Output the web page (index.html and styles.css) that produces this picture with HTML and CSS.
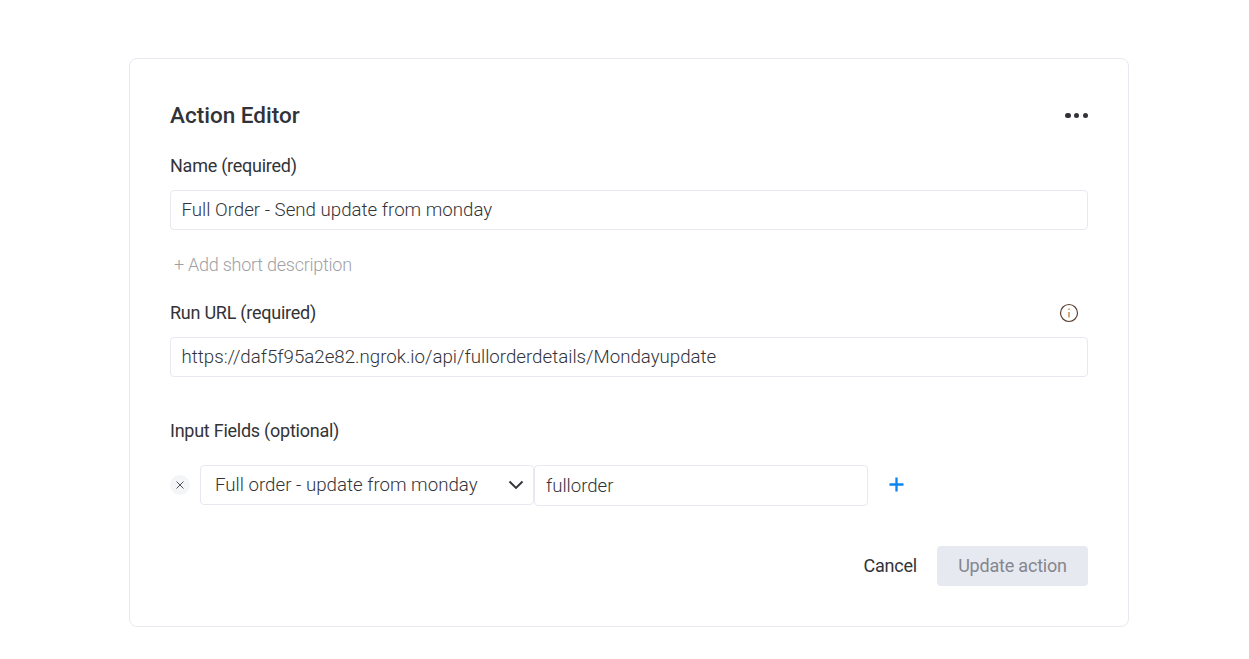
FILE: index.html
```html
<!DOCTYPE html>
<html lang="en">
<head>
    <meta charset="UTF-8">
    <meta name="viewport" content="width=device-width, initial-scale=1.0">
    <link rel="stylesheet" href="styles.css">
    <title>Action Editor</title>
</head>
<body>
    <main class="card">
        <div class="card-header">
            <h1>Action Editor</h1>
            <div class="more-menu"><span></span><span></span><span></span></div>
        </div>

        <div class="label-row name-label"><label>Name (required)</label></div>
        <div class="text-field">Full Order - Send update from monday</div>
        <div class="add-description">+ Add short description</div>

        <div class="label-row url-label">
            <label>Run URL (required)</label>
            <svg class="info-icon" width="20" height="20" viewBox="0 0 20 20" fill="none">
                <circle cx="10" cy="10" r="8.5" stroke="#5a4030" stroke-width="1.2"/>
                <path d="M10 9v5.5" stroke="#b5702a" stroke-width="1.2"/>
                <path d="M10 5.6v1.5" stroke="#b5702a" stroke-width="1.2"/>
            </svg>
        </div>
        <div class="text-field">https://daf5f95a2e82.ngrok.io/api/fullorderdetails/Mondayupdate</div>

        <div class="label-row inputs-label"><label>Input Fields (optional)</label></div>
        <div class="input-row">
            <div class="remove-btn">
                <svg width="10" height="10" viewBox="0 0 10 10" fill="none">
                    <path d="M1.5 1.5l7 7M8.5 1.5l-7 7" stroke="#50525a" stroke-width="1"/>
                </svg>
            </div>
            <div class="select-field">
                <span>Full order - update from monday</span>
                <svg width="16" height="10" viewBox="0 0 16 10" fill="none">
                    <path d="M1.5 1.5L8 8l6.5-6.5" stroke="#323338" stroke-width="1.9"/>
                </svg>
            </div>
            <div class="key-field">fullorder</div>
            <div class="add-btn">
                <svg width="15" height="15" viewBox="0 0 15 15" fill="none">
                    <path d="M7.5 0.5v14M0.5 7.5h14" stroke="#0a84f0" stroke-width="2.3"/>
                </svg>
            </div>
        </div>

        <div class="actions">
            <button class="cancel-btn" type="button">Cancel</button>
            <button class="update-btn" type="button">Update action</button>
        </div>
    </main>
</body>
</html>
```

FILE: styles.css
```css
* {
  box-sizing: border-box;
}

body {
  margin: 0;
  background-color: #fff;
  color: #323338;
  font-family: Roboto, "Liberation Sans", sans-serif;
  font-size: 18px;
  letter-spacing: -0.25px;
  line-height: 24px;
}

.card {
  width: 1000px;
  height: 569px;
  margin: 58px 0 0 129px;
  padding: 42px 40px 40px 40px;
  background-color: #fff;
  border: 1px solid #e6e9ef;
  border-radius: 8px;
}

.card-header {
  display: flex;
  justify-content: space-between;
  align-items: center;
  height: 30px;
}

.card-header h1 {
  margin: 0 0 2px 0;
  font-size: 22.5px;
  font-weight: 500;
  letter-spacing: 0;
  line-height: 30px;
}

.more-menu {
  display: flex;
  gap: 3.2px;
  margin-top: -1px;
}

.more-menu span {
  width: 5.5px;
  height: 5.5px;
  border-radius: 50%;
  background-color: #323338;
}

.label-row {
  display: flex;
  justify-content: space-between;
  align-items: center;
  height: 24px;
  margin-bottom: 12px;
}

.name-label {
  margin-top: 23px;
}

.url-label {
  margin-top: 24px;
}

.inputs-label {
  margin-top: 42px;
  margin-bottom: 22px;
}

.info-icon {
  margin-right: 9px;
}

.text-field {
  height: 40px;
  padding: 7px 10.5px;
  border: 1px solid #e6e9ef;
  border-radius: 4px;
  font-size: 18.7px;
  font-weight: 300;
  letter-spacing: 0;
  line-height: 24px;
}

.add-description {
  margin-top: 23px;
  padding-left: 4px;
  color: #9f9fa5;
  font-weight: 300;
}

.input-row {
  display: flex;
  align-items: flex-start;
  height: 41px;
}

.remove-btn {
  display: flex;
  justify-content: center;
  align-items: center;
  width: 20px;
  height: 20px;
  margin: 10px 10px 0 0;
  border-radius: 50%;
  background-color: #f4f5f7;
}

.select-field {
  display: flex;
  justify-content: space-between;
  align-items: center;
  width: 334px;
  height: 40px;
  padding: 0 9px 0 14px;
  border: 1px solid #e6e9ef;
  border-radius: 4px;
  font-size: 18.7px;
  font-weight: 300;
  letter-spacing: 0;
}

.key-field {
  width: 334px;
  height: 41px;
  padding: 8px 11px;
  border: 1px solid #e6e9ef;
  border-radius: 4px;
  font-size: 18.6px;
  font-weight: 300;
  letter-spacing: 0;
}

.add-btn {
  display: flex;
  margin: 12px 0 0 21px;
}

.actions {
  display: flex;
  justify-content: flex-end;
  align-items: center;
  gap: 20px;
  margin-top: 40px;
}

.actions button {
  height: 40px;
  padding-bottom: 2px;
  border: none;
  font-family: inherit;
  font-size: 18px;
  letter-spacing: -0.2px;
}

.cancel-btn {
  padding: 0;
  background: none;
  color: #323338;
}

.update-btn {
  width: 151px;
  border-radius: 4px;
  background-color: #e6e9ef;
  color: #85868f;
}
```
